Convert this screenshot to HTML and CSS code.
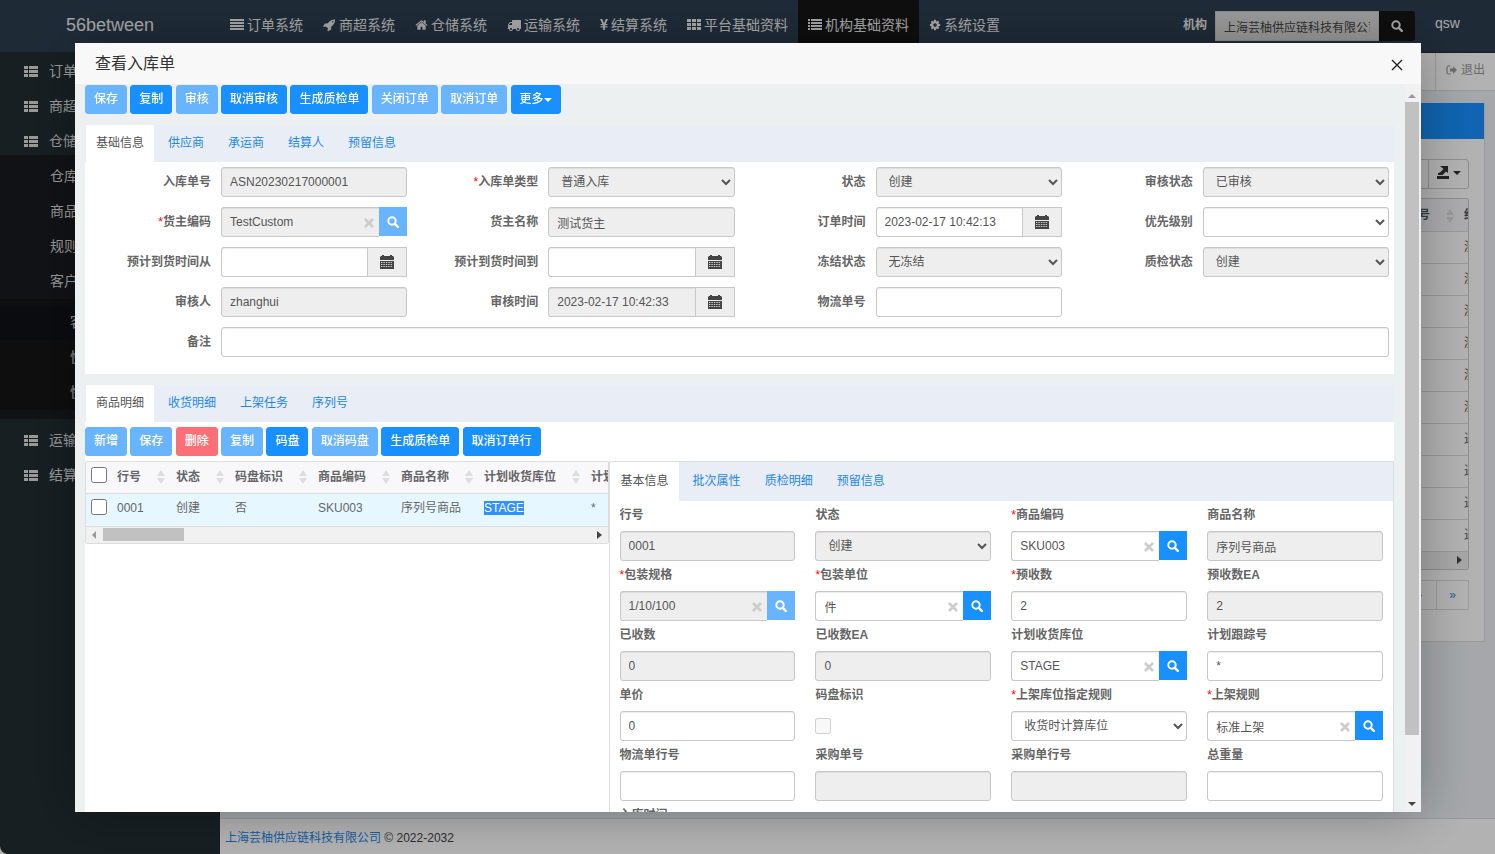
FILE: index.html
```html
<!DOCTYPE html>
<html lang="zh-CN">
<head>
<meta charset="utf-8">
<meta name="viewport" content="width=device-width, initial-scale=1">
<title>查看入库单</title>
<link rel="stylesheet" href="styles.css">
</head>
<body>
<svg class="sprite" aria-hidden="true">
  <symbol id="i-align" viewBox="0 0 14 14"><path d="M0 1h14v2H0zM0 4h14v2H0zM0 7h14v2H0zM0 10h14v2H0z"/></symbol>
  <symbol id="i-rocket" viewBox="0 0 1792 1792"><path d="M1440 448q0-40-28-68t-68-28-68 28-28 68 28 68 68 28 68-28 28-68zm224-288q0 249-75.5 430.5t-253.5 360.5q-81 80-195 176l-20 379q-2 16-16 26l-384 224q-7 4-16 4-12 0-23-9l-64-64q-13-14-8-32l85-276-281-281-276 85q-3 1-9 1-14 0-23-9l-64-64q-17-19-5-39l224-384q10-14 26-16l379-20q96-114 176-195 188-187 358-258t431-71q14 0 24 9.5t10 22.5z"/></symbol>
  <symbol id="i-home" viewBox="0 0 1792 1792"><path d="M1472 992v480q0 26-19 45t-45 19h-384v-384h-256v384h-384q-26 0-45-19t-19-45v-480q0-1 .5-3t.5-3l575-474 575 474q1 2 1 6zm223-69l-62 74q-8 9-21 11h-3q-13 0-21-7l-692-577-692 577q-12 8-24 7-13-2-21-11l-62-74q-8-10-7-23.5t11-21.5l719-599q32-26 76-26t76 26l244 204v-195q0-14 9-23t23-9h192q14 0 23 9t9 23v408l219 182q10 8 11 21.5t-7 23.5z"/></symbol>
  <symbol id="i-truck" viewBox="0 0 1792 1792"><path d="M640 1408q0-52-38-90t-90-38-90 38-38 90 38 90 90 38 90-38 38-90zm-384-512h384v-256h-158q-13 0-22 9l-195 195q-9 9-9 22v30zm1280 512q0-52-38-90t-90-38-90 38-38 90 38 90 90 38 90-38 38-90zm256-1088v1024q0 15-4 26.5t-13.5 18.5-16.5 11.5-23.5 6-22.5 2-25.5 0-22.5-.5q0 106-75 181t-181 75-181-75-75-181h-384q0 106-75 181t-181 75-181-75-75-181h-64q-3 0-22.5.5t-25.5 0-22.5-2-23.5-6-16.5-11.5-13.5-18.5-4-26.5q0-26 19-45t45-19v-320q0-8-.5-35t0-38 2.5-34.5 6.5-37 14-30.5 22.5-30l198-198q19-19 50.5-32t58.5-13h160v-192q0-26 19-45t45-19h1024q26 0 45 19t19 45z"/></symbol>
  <symbol id="i-yen" viewBox="0 0 8 14"><path d="M0 1h2.2L4 5.2 5.8 1H8L5.7 6H7.4v1.2H5.1l-.2.5v.6h2.5v1.2H4.9V12H3.1V9.500H.6V8.300h2.500v-.6l-.2-.5H.6V6h1.700z"/></symbol>
  <symbol id="i-th" viewBox="0 0 14 14"><path d="M0 1h4v3H0zM5 1h4v3H5zM10 1h4v3h-4zM0 5h4v3H0zM5 5h4v3H5zM10 5h4v3h-4zM0 9h4v3H0zM5 9h4v3H5zM10 9h4v3h-4z"/></symbol>
  <symbol id="i-list" viewBox="0 0 14 14"><path d="M0 1h2v2H0zM3 1h11v2H3zM0 4h2v2H0zM3 4h11v2H3zM0 7h2v2H0zM3 7h11v2H3zM0 10h2v2H0zM3 10h11v2H3z"/></symbol>
  <symbol id="i-cog" viewBox="0 0 1792 1792"><path d="M1152 896q0-106-75-181t-181-75-181 75-75 181 75 181 181 75 181-75 75-181zm512-109v222q0 12-8 23t-20 13l-185 28q-19 54-39 91 35 50 107 138 10 12 10 25t-9 23q-27 37-99 108t-94 71q-12 0-26-9l-138-108q-44 23-91 38-16 136-29 186-7 28-36 28h-222q-14 0-24.5-8.5t-11.500-21.500l-28-184q-49-16-90-37l-141 107q-10 9-25 9-14 0-25-11-126-114-165-168-7-10-7-23 0-12 8-23 15-21 51-66.500t54-70.500q-27-50-41-99l-183-27q-13-2-21-12.500t-8-23.500v-222q0-12 8-23t19-13l186-28q14-46 39-92-40-57-107-138-10-12-10-24 0-10 9-23 26-36 98.500-107.500t94.500-71.500q13 0 26 10l138 107q44-23 91-38 16-136 29-186 7-28 36-28h222q14 0 24.500 8.500t11.500 21.500l28 184q49 16 90 37l142-107q9-9 24-9 13 0 25 10 129 119 165 170 7 8 7 22 0 12-8 23-15 21-51 66.500t-54 70.500q26 50 41 98l183 28q13 2 21 12.500t8 23.500z"/></symbol>
  <symbol id="i-menu" viewBox="0 0 14 12"><path d="M0 0h4v3H0zM5 0h9v3H5zM0 4h4v3H0zM5 4h9v3H5zM0 8h4v3H0zM5 8h9v3H5z"/></symbol>
  <symbol id="i-search" viewBox="0 0 12 12"><circle cx="5" cy="5" r="3.700" fill="none" stroke="currentColor" stroke-width="2"/><path d="M7.800 7.800l3 3" stroke="currentColor" stroke-width="2.400" stroke-linecap="round"/></symbol>
  <symbol id="i-cal" viewBox="0 0 14 14"><path d="M1 1h1V0h2v1h6V0h2v1h1l1 1v3H0V2z"/><path d="M0 6h14v8H0z"/><path d="M1 7.500h12M1 9.500h12M1 11.500h12" stroke="#eee" stroke-width="1" stroke-dasharray="1.500 .9" opacity=".75"/></symbol>
  <symbol id="i-clear" viewBox="0 0 10 10"><path d="M1 1l8 8M9 1l-8 8" stroke="currentColor" stroke-width="2.600"/></symbol>
  <symbol id="i-close" viewBox="0 0 12 12"><path d="M1 1l10 10M11 1L1 11" stroke="currentColor" stroke-width="1.400"/></symbol>
  <symbol id="i-sort" viewBox="0 0 8 14"><path d="M4 0l4 6H0zM4 14l4-6H0z"/></symbol>
  <symbol id="i-out" viewBox="0 0 11 10"><path d="M4.500 1H2.500Q1 1 1 2.500v5Q1 9 2.500 9h2" fill="none" stroke="currentColor" stroke-width="1.200"/><path d="M4 3.500h3V1.200L11 5 7 8.800V6.500H4z"/></symbol>
  <symbol id="i-export" viewBox="0 0 12 13"><path d="M0 10h12v3H0zM3 0h8v7L9 5.500 5.500 9H1V7l2-.5L6.500 3z"/></symbol>
  <symbol id="i-caret" viewBox="0 0 8 4"><path d="M0 0h8L4 4z"/></symbol>
  <symbol id="i-left" viewBox="0 0 4 8"><path d="M4 0v8L0 4z"/></symbol>
  <symbol id="i-right" viewBox="0 0 5 8"><path d="M0 0v8l5-4z"/></symbol>
</svg>

<div class="page">
  <header class="topbar">
    <a class="brand" href="#">56between</a>
    <nav class="topnav">
      <a href="#"><svg class="ic14"><use href="#i-align"/></svg>订单系统</a>
      <a href="#"><svg class="ic13"><use href="#i-rocket"/></svg>商超系统</a>
      <a href="#"><svg class="ic13"><use href="#i-home"/></svg>仓储系统</a>
      <a href="#"><svg class="ic14"><use href="#i-truck"/></svg>运输系统</a>
      <a href="#"><svg class="ic-yen"><use href="#i-yen"/></svg>结算系统</a>
      <a href="#"><svg class="ic14"><use href="#i-th"/></svg>平台基础资料</a>
      <a href="#" class="on"><svg class="ic14"><use href="#i-list"/></svg>机构基础资料</a>
      <a href="#"><svg class="ic-cog"><use href="#i-cog"/></svg>系统设置</a>
    </nav>
    <form class="org">
      <label for="org">机构</label>
      <input id="org" type="text" value="上海芸柚供应链科技有限公司">
      <button type="button" aria-label="搜索"><svg class="ic12"><use href="#i-search"/></svg></button>
    </form>
    <a class="user" href="#">qsw</a>
  </header>
  <div class="shell">
    <aside class="sidebar">
      <a class="top" href="#"><svg class="ic-menu"><use href="#i-menu"/></svg>订单</a>
      <a class="top" href="#"><svg class="ic-menu"><use href="#i-menu"/></svg>商超</a>
      <a class="top" href="#"><svg class="ic-menu"><use href="#i-menu"/></svg>仓储</a>
      <div class="sub">
        <a href="#">仓库</a><a href="#">商品</a><a href="#">规则</a><a href="#">客户</a>
        <div class="subsub"><a class="on" href="#">客户</a><a href="#">快递</a><a href="#">快递</a></div>
      </div>
      <a class="top" href="#"><svg class="ic-menu"><use href="#i-menu"/></svg>运输</a>
      <a class="top" href="#"><svg class="ic-menu"><use href="#i-menu"/></svg>结算</a>
    </aside>
    <main class="main">
      <div class="tabstrip"><button type="button"><svg class="ic-out"><use href="#i-out"/></svg>退出</button></div>
      <div class="content">
        <section class="panel">
          <div class="panel-head"></div>
          <div class="panel-body">
            <div class="tools"><span></span><button type="button" aria-label="导出"><svg class="ic-export"><use href="#i-export"/></svg><svg class="ic-caret"><use href="#i-caret"/></svg></button></div>
            <div class="bg-table">
              <table>
                <colgroup><col><col class="c72"></colgroup>
                <thead><tr><th class="end">号<svg class="ic-sort"><use href="#i-sort"/></svg></th><th>结算</th></tr></thead>
                <tbody>
                  <tr><td></td><td>测试</td></tr><tr><td></td><td>测试</td></tr><tr><td></td><td>测试</td></tr><tr><td></td><td>测试</td></tr><tr><td></td><td>测试</td></tr><tr><td></td><td>测试</td></tr><tr><td></td><td>进</td></tr><tr><td></td><td>进</td></tr><tr><td></td><td>进</td></tr><tr><td></td><td>进</td></tr>
                </tbody>
              </table>
              <div class="bg-scroll"><svg class="ic-arrow"><use href="#i-right"/></svg></div>
            </div>
            <div class="pager"><a href="#">›</a><a href="#">»</a></div>
          </div>
        </section>
      </div>
      <footer class="footer"><a href="#">上海芸柚供应链科技有限公司</a> © 2022-2032</footer>
    </main>
  </div>
</div>

<div class="shade"></div>
<div class="modal" role="dialog" aria-labelledby="dlg-title">
  <div class="modal-head">
    <h1 id="dlg-title">查看入库单</h1>
    <button type="button" class="close" aria-label="关闭"><svg class="ic12"><use href="#i-close"/></svg></button>
  </div>
  <div class="modal-body">
    <div class="modal-content">
      <div class="btns">
        <button type="button" class="btn off">保存</button>
        <button type="button" class="btn">复制</button>
        <button type="button" class="btn off">审核</button>
        <button type="button" class="btn">取消审核</button>
        <button type="button" class="btn">生成质检单</button>
        <button type="button" class="btn off">关闭订单</button>
        <button type="button" class="btn off">取消订单</button>
        <button type="button" class="btn">更多<svg class="ic-caret"><use href="#i-caret"/></svg></button>
      </div>

      <section class="card">
        <nav class="tabs"><a class="on" href="#">基础信息</a><a href="#">供应商</a><a href="#">承运商</a><a href="#">结算人</a><a href="#">预留信息</a></nav>
        <form class="form">
          <div class="field"><label for="f1">入库单号</label><input id="f1" class="ctl" type="text" value="ASN20230217000001" readonly></div>
          <div class="field"><label for="f2"><i>*</i>入库单类型</label><select id="f2" class="ctl" disabled><option>普通入库</option></select></div>
          <div class="field"><label for="f3">状态</label><select id="f3" class="ctl" disabled><option>创建</option></select></div>
          <div class="field"><label for="f4">审核状态</label><select id="f4" class="ctl" disabled><option>已审核</option></select></div>

          <div class="field"><label for="f5"><i>*</i>货主编码</label><div class="group"><input id="f5" class="ctl" type="text" value="TestCustom" readonly><svg class="ic-clear"><use href="#i-clear"/></svg><button type="button" class="find off" aria-label="查找"><svg class="ic12"><use href="#i-search"/></svg></button></div></div>
          <div class="field"><label for="f6">货主名称</label><input id="f6" class="ctl" type="text" value="测试货主" readonly></div>
          <div class="field"><label for="f7">订单时间</label><div class="group"><input id="f7" class="ctl" type="text" value="2023-02-17 10:42:13"><button type="button" class="date" aria-label="选择日期"><svg class="ic14"><use href="#i-cal"/></svg></button></div></div>
          <div class="field"><label for="f8">优先级别</label><select id="f8" class="ctl"><option></option></select></div>

          <div class="field"><label for="f9">预计到货时间从</label><div class="group"><input id="f9" class="ctl" type="text"><button type="button" class="date" aria-label="选择日期"><svg class="ic14"><use href="#i-cal"/></svg></button></div></div>
          <div class="field"><label for="f10">预计到货时间到</label><div class="group"><input id="f10" class="ctl" type="text"><button type="button" class="date" aria-label="选择日期"><svg class="ic14"><use href="#i-cal"/></svg></button></div></div>
          <div class="field"><label for="f11">冻结状态</label><select id="f11" class="ctl" disabled><option>无冻结</option></select></div>
          <div class="field"><label for="f12">质检状态</label><select id="f12" class="ctl" disabled><option>创建</option></select></div>

          <div class="field"><label for="f13">审核人</label><input id="f13" class="ctl" type="text" value="zhanghui" readonly></div>
          <div class="field"><label for="f14">审核时间</label><div class="group"><input id="f14" class="ctl" type="text" value="2023-02-17 10:42:33" readonly><button type="button" class="date" aria-label="选择日期"><svg class="ic14"><use href="#i-cal"/></svg></button></div></div>
          <div class="field"><label for="f15">物流单号</label><input id="f15" class="ctl" type="text"></div>

          <div class="field wide"><label for="f16">备注</label><input id="f16" class="ctl" type="text"></div>
        </form>
      </section>

      <section class="card grow">
        <nav class="tabs"><a class="on" href="#">商品明细</a><a href="#">收货明细</a><a href="#">上架任务</a><a href="#">序列号</a></nav>
        <div class="btns inner">
          <button type="button" class="btn off">新增</button>
          <button type="button" class="btn off">保存</button>
          <button type="button" class="btn del">删除</button>
          <button type="button" class="btn off">复制</button>
          <button type="button" class="btn">码盘</button>
          <button type="button" class="btn off">取消码盘</button>
          <button type="button" class="btn">生成质检单</button>
          <button type="button" class="btn">取消订单行</button>
        </div>
        <div class="split">
          <div class="list">
            <div class="list-box">
              <div class="list-clip">
                <table class="grid">
                  <colgroup><col class="c24"><col class="c59"><col class="c59"><col class="c83"><col class="c83"><col class="c83"><col class="c107"><col class="c83"></colgroup>
                  <thead><tr>
                    <th class="chk"><input type="checkbox" aria-label="全选"></th>
                    <th><span>行号<svg class="ic-sort"><use href="#i-sort"/></svg></span></th>
                    <th><span>状态<svg class="ic-sort"><use href="#i-sort"/></svg></span></th>
                    <th><span>码盘标识<svg class="ic-sort"><use href="#i-sort"/></svg></span></th>
                    <th><span>商品编码<svg class="ic-sort"><use href="#i-sort"/></svg></span></th>
                    <th><span>商品名称<svg class="ic-sort"><use href="#i-sort"/></svg></span></th>
                    <th><span>计划收货库位<svg class="ic-sort"><use href="#i-sort"/></svg></span></th>
                    <th>计划</th>
                  </tr></thead>
                  <tbody><tr>
                    <td class="chk"><input type="checkbox" aria-label="选择 0001"></td>
                    <td>0001</td><td>创建</td><td>否</td><td>SKU003</td><td>序列号商品</td><td><mark>STAGE</mark></td><td>*</td>
                  </tr></tbody>
                </table>
              </div>
              <div class="hscroll"><svg class="ic-left"><use href="#i-left"/></svg><div class="hthumb"></div><svg class="ic-arrow"><use href="#i-right"/></svg></div>
            </div>
          </div>
          <div class="detail">
            <nav class="tabs"><a class="on" href="#">基本信息</a><a href="#">批次属性</a><a href="#">质检明细</a><a href="#">预留信息</a></nav>
            <form class="dform">
              <div><label for="d1">行号</label><input id="d1" class="ctl" type="text" value="0001" readonly></div>
              <div><label for="d2">状态</label><select id="d2" class="ctl" disabled><option>创建</option></select></div>
              <div><label for="d3"><i>*</i>商品编码</label><div class="group"><input id="d3" class="ctl" type="text" value="SKU003"><svg class="ic-clear"><use href="#i-clear"/></svg><button type="button" class="find" aria-label="查找"><svg class="ic12"><use href="#i-search"/></svg></button></div></div>
              <div><label for="d4">商品名称</label><input id="d4" class="ctl" type="text" value="序列号商品" readonly></div>

              <div><label for="d5"><i>*</i>包装规格</label><div class="group"><input id="d5" class="ctl" type="text" value="1/10/100" readonly><svg class="ic-clear"><use href="#i-clear"/></svg><button type="button" class="find off" aria-label="查找"><svg class="ic12"><use href="#i-search"/></svg></button></div></div>
              <div><label for="d6"><i>*</i>包装单位</label><div class="group"><input id="d6" class="ctl" type="text" value="件"><svg class="ic-clear"><use href="#i-clear"/></svg><button type="button" class="find" aria-label="查找"><svg class="ic12"><use href="#i-search"/></svg></button></div></div>
              <div><label for="d7"><i>*</i>预收数</label><input id="d7" class="ctl" type="text" value="2"></div>
              <div><label for="d8">预收数EA</label><input id="d8" class="ctl" type="text" value="2" readonly></div>

              <div><label for="d9">已收数</label><input id="d9" class="ctl" type="text" value="0" readonly></div>
              <div><label for="d10">已收数EA</label><input id="d10" class="ctl" type="text" value="0" readonly></div>
              <div><label for="d11">计划收货库位</label><div class="group"><input id="d11" class="ctl" type="text" value="STAGE"><svg class="ic-clear"><use href="#i-clear"/></svg><button type="button" class="find" aria-label="查找"><svg class="ic12"><use href="#i-search"/></svg></button></div></div>
              <div><label for="d12">计划跟踪号</label><input id="d12" class="ctl" type="text" value="*"></div>

              <div><label for="d13">单价</label><input id="d13" class="ctl" type="text" value="0"></div>
              <div><label for="d14">码盘标识</label><div class="tick"><input id="d14" type="checkbox" disabled></div></div>
              <div><label for="d15"><i>*</i>上架库位指定规则</label><select id="d15" class="ctl"><option>收货时计算库位</option></select></div>
              <div><label for="d16"><i>*</i>上架规则</label><div class="group"><input id="d16" class="ctl" type="text" value="标准上架"><svg class="ic-clear"><use href="#i-clear"/></svg><button type="button" class="find" aria-label="查找"><svg class="ic12"><use href="#i-search"/></svg></button></div></div>

              <div><label for="d17">物流单行号</label><input id="d17" class="ctl" type="text"></div>
              <div><label for="d18">采购单号</label><input id="d18" class="ctl" type="text" readonly></div>
              <div><label for="d19">采购单行号</label><input id="d19" class="ctl" type="text" readonly></div>
              <div><label for="d20">总重量</label><input id="d20" class="ctl" type="text"></div>

              <div><label for="d21">入库时间</label><input id="d21" class="ctl" type="text"></div>
            </form>
          </div>
        </div>
      </section>
    </div>
    <div class="vscroll"><svg class="ic-up"><use href="#i-caret"/></svg><div class="track"><div class="vthumb"></div></div><svg class="ic-down"><use href="#i-caret"/></svg></div>
  </div>
</div>
</body>
</html>
```
FILE: styles.css
```css
* { box-sizing: border-box; }

html, body { height: 100%; }

body {
  margin: 0;
  overflow: hidden;
  font: 12px/18px "Liberation Sans", "Noto Sans CJK SC", sans-serif;
  color: #555;
  background: #fff;
}

a { color: #1e88e5; text-decoration: none; }
input, select, button { font: inherit; color: inherit; margin: 0; }
button { cursor: pointer; }
svg { fill: currentColor; flex: none; }
label i { color: #f00; font-style: normal; font-weight: 400; }

.sprite { display: none; }
.ic14 { width: 14px; height: 14px; }
.ic13 { width: 13px; height: 14px; }
.ic12 { width: 12px; height: 12px; }
.ic-cog { width: 12px; height: 14px; }
.ic-yen { width: 8px; height: 14px; }
.ic-menu { width: 14px; height: 12px; }
.ic-sort { width: 8px; height: 14px; color: #ddd; }
.ic-out { width: 11px; height: 10px; }
.ic-export { width: 12px; height: 13px; }
.ic-caret { width: 8px; height: 4px; vertical-align: middle; }
.ic-arrow { width: 5px; height: 8px; color: #444; }
.ic-left { width: 4px; height: 8px; color: #999; }

/* Page behind the dialog */
.page { display: flex; flex-direction: column; height: 100%; background: #222d32; border-bottom-left-radius: 8px; }

.topbar { display: flex; height: 53px; flex: none; background: #2c3e50; color: #eee; border-bottom: 1px solid #222d32; }
.topbar a { color: #eee; }
.brand { width: 220px; text-align: center; font-size: 18px; line-height: 50px; }
.topnav { display: flex; flex: 1; font-size: 14px; }
.topnav a { display: flex; align-items: center; gap: 3px; padding: 0 10px 2px; white-space: nowrap; }
.topnav .on { background: #151515; }
.org { display: flex; padding-top: 11px; }
.org label { padding-right: 8px; font-weight: 700; line-height: 28px; }
.org input { width: 164px; height: 30px; padding: 0 8px; border: 1px solid #ccc; background: #ddd; color: #444; }
.org button { width: 36px; height: 30px; display: grid; place-items: center; border: 0; border-radius: 0 3px 3px 0; background: #151515; }
.user { width: 80px; padding-left: 20px; font-size: 14px; line-height: 46px; }

.shell { display: flex; flex: 1; min-height: 0; }
.sidebar { width: 220px; flex: none; padding-top: 1px; font-size: 14px; line-height: 35px; }
.sidebar a { display: block; color: #ddd; }
.sidebar .top { display: flex; align-items: center; gap: 11px; padding-left: 24px; }
.sub { margin: -4px 0 4px; padding: 4px 0 9px; background: #191b1f; }
.sub > a { padding-left: 50px; }
.subsub { padding-top: 6px; background: #151515; }
.subsub a { padding-left: 70px; }
.subsub .on { background: #0f1216; }

.main { flex: 1; min-width: 0; display: flex; flex-direction: column; background: #ecf0f5; }
.tabstrip { display: flex; justify-content: flex-end; height: 38px; flex: none; background: #fff; border-bottom: 1px solid #ddd; }
.tabstrip button { display: flex; align-items: center; gap: 4px; width: 60px; padding: 0 0 3px 10px; border: 0; border-left: 1px solid #ddd; background: none; color: #999; white-space: nowrap; }
.content { flex: 1; padding: 12px 10px; min-height: 0; }
.panel { height: 539px; background: #fff; border: solid #ddd; border-width: 0 1px 1px; }
.panel-head { height: 36px; background: #1890ff; }
.panel-body { padding: 20px 15px; }
.tools { display: flex; justify-content: flex-end; margin-bottom: 9px; }
.tools span { width: 40px; border: 1px solid #ccc; border-right: 0; }
.tools button { display: flex; align-items: center; justify-content: center; gap: 4px; width: 41px; height: 30px; padding: 0 0 3px; border: 1px solid #ccc; border-radius: 0 3px 3px 0; background: #fff; color: #333; }
.bg-table { overflow: hidden; border: 1px solid #ccc; border-radius: 2px; }
.bg-table table { width: calc(100% + 60px); table-layout: fixed; border-collapse: collapse; }
.bg-table th, .bg-table td { height: 32px; padding: 0 8px; border-bottom: 1px solid #ddd; text-align: left; }
.bg-table thead { background: #f7f7fa; }
.bg-table .end { padding-right: 2px; text-align: right; }
.bg-table .end svg { margin-left: 16px; vertical-align: middle; }
.c72 { width: 72px; }
.bg-scroll { display: flex; align-items: center; justify-content: flex-end; height: 17px; padding-right: 6px; background: #f0f0f0; }
.pager { display: flex; justify-content: flex-end; margin-top: 10px; line-height: 28px; text-align: center; }
.pager a { width: 33px; border: 1px solid #ddd; border-right: 0; }
.pager a:last-child { border-right: 1px solid #ddd; }
.footer { height: 36px; flex: none; padding: 0 5px; line-height: 38px; background: #fff; border-top: 1px solid #ddd; color: #444; }

.shade { position: fixed; inset: 0; background: rgba(0, 0, 0, .3); }

/* Dialog */
.modal { position: fixed; inset: 43px 74px 42px 75px; display: flex; flex-direction: column; background: #ecf0f1; box-shadow: 1px 1px 50px rgba(0, 0, 0, .3); }
.modal-head { display: flex; align-items: center; justify-content: space-between; height: 41px; flex: none; padding: 0 18px 0 20px; background: #f8f8f8; }
.modal-head h1 { margin: 0; font-size: 16px; font-weight: 400; color: #333; }
.close { display: grid; place-items: center; padding: 2px 0 0; border: 0; background: none; color: #222; }
.modal-body { display: flex; flex: 1; min-height: 0; }
.modal-content { flex: 1; min-width: 0; display: flex; flex-direction: column; padding: 1px 11px 0 10px; overflow: hidden; }

.btns { display: block; flex: none; height: 40px; white-space: nowrap; }
.btns.inner { height: 39px; padding-top: 5px; }
.btn { height: 29px; padding: 0 8px 1px; border: 1px solid #1890ff; border-radius: 3px; background: #1890ff; color: #fff; font-weight: 500; vertical-align: top; }
.btn.off { border-color: #69b4ff; background: #69b4ff; }
.btn.del { border-color: #fb7077; background: #fb7077; }

.card { flex: none; background: #fff; }
.card.grow { flex: 1 0 auto; display: flex; flex-direction: column; margin-top: 11px; }
.tabs { display: flex; gap: 2px; height: 37px; flex: none; background: #e9edf6; line-height: 37px; }
.tabs a { padding: 0 11px; white-space: nowrap; }
.tabs .on { background: #fff; color: #555; border: solid #e9edf6; border-width: 0 1px; padding: 0 10px; }

.form { display: grid; grid-template-columns: repeat(4, 1fr); row-gap: 10px; padding: 5px 0 17px; }
.field { display: flex; gap: 10px; padding-right: 5px; min-width: 0; }
.field.wide { grid-column: 1 / -1; }
.field label { width: 126px; flex: none; text-align: right; line-height: 30px; font-weight: 700; color: #666; white-space: nowrap; }

.ctl { flex: 1; width: 100%; min-width: 0; height: 30px; padding: 0 8px; border: 1px solid #c8c8c8; border-radius: 3px; background: #fff; color: #555; outline: 0; box-shadow: inset 0 1px 1px rgba(0, 0, 0, .07); }
.ctl:read-only:not(select), select.ctl:disabled { background: #eee; }
select.ctl:disabled { opacity: 1; }
.group { display: flex; flex: 1; min-width: 0; }
.group .ctl { border-radius: 3px 0 0 3px; border-right: 0; }
.group .ic-clear { width: 10px; height: 10px; margin: 11px 5px 0 -15px; color: #ccc; z-index: 1; }
.find { width: 28px; height: 29px; display: grid; place-items: center; flex: none; padding: 0; border: 0; background: #1890ff; color: #fff; }
.find.off { background: #69b4ff; }
.date { width: 40px; height: 30px; display: grid; place-items: center; flex: none; padding: 0; border: 1px solid #c8c8c8; background: #eee; color: #444; }

.split { display: flex; flex: 1; }
.list { width: 40%; flex: none; }
.list-box { border: 1px solid #ddd; border-radius: 2px; }
.list-clip { overflow: hidden; }
.grid { width: 580px; table-layout: fixed; border-collapse: collapse; }
.grid th, .grid td { padding: 0 0 0 8px; text-align: left; white-space: nowrap; color: #666; }
.grid th { height: 31px; background: #f8f8fb; border-bottom: 1px solid #ddd; }
.grid th span { display: flex; align-items: center; justify-content: space-between; padding-right: 3px; }
.grid td { height: 33px; padding-bottom: 3px; background: #e6f7ff; border-bottom: 1px solid #ddd; }
.grid .chk { padding: 0 0 5px 5px; line-height: 0; }
.grid .chk input { width: 16px; height: 16px; }
.c24 { width: 23px; }
.c59 { width: 59px; }
.c83 { width: 83px; }
.c107 { width: 107px; }
mark { background: #3390ff; color: #fff; }
.hscroll { display: flex; align-items: center; height: 16px; padding: 0 6px; background: #f1f1f1; }
.hthumb { width: 81px; height: 13px; margin: 0 auto 0 7px; background: #c1c1c1; }

.detail { flex: 1; min-width: 0; border: solid #ddd; border-width: 1px 1px 0; }
.detail .tabs { height: 39px; line-height: 38px; }
.detail .tabs .on { border-left-color: #fff; }
.dform { display: grid; grid-template-columns: repeat(4, 1fr); column-gap: 20px; padding: 0 10px; }
.dform label { display: block; line-height: 28px; padding-bottom: 2px; font-weight: 700; color: #666; white-space: nowrap; }
.tick { height: 30px; padding-top: 7px; line-height: 0; }
.tick input { width: 16px; height: 16px; }

.vscroll { width: 16px; flex: none; display: flex; flex-direction: column; align-items: center; padding: 10px 2px 6px 0; background: #f1f1f1; }
.ic-up, .ic-down { width: 8px; height: 4px; }
.ic-up { transform: rotate(180deg); color: #999; }
.ic-down { color: #444; }
.track { flex: 1; align-self: stretch; padding: 4px 0; }
.vthumb { height: 91%; background: #c1c1c1; }
```
